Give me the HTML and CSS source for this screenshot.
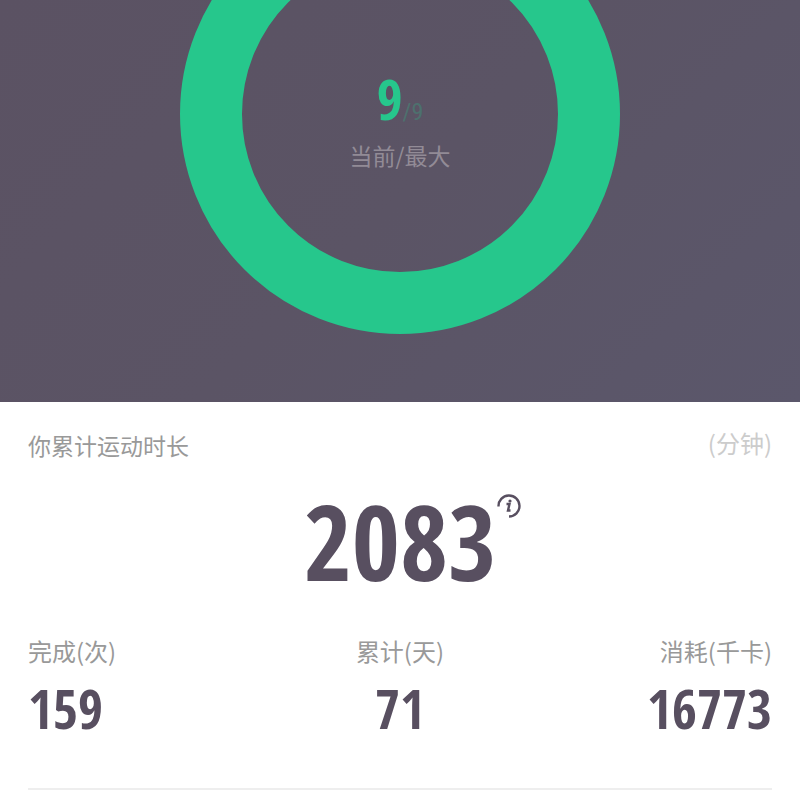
FILE: index.html
```html
<!DOCTYPE html>
<html lang="zh-CN">
<head>
<meta charset="utf-8">
<meta name="viewport" content="width=device-width, initial-scale=1">
<title>运动统计</title>
<link rel="stylesheet" href="styles.css">
</head>
<body>
<section class="hero">
  <svg class="ring" viewBox="0 0 440 440" aria-hidden="true"><circle cx="220" cy="220" r="189" fill="none" stroke="#26c78c" stroke-width="62"/></svg>
  <div class="level">
    <p class="score"><strong>9</strong><span>/9</span></p>
    <p class="caption">当前/最大</p>
  </div>
</section>
<main class="summary">
  <header class="heading"><h1>你累计运动时长</h1><span class="unit">(分钟)</span></header>
  <div class="total">
    <span class="number">2083</span>
    <button class="info" type="button" aria-label="说明"><svg viewBox="0 0 26 26" aria-hidden="true"><path d="M2.500 13.500A10.500 10.500 0 1 1 13 23.500" fill="none" stroke="#584f60" stroke-width="2.400"/><path d="M10.500 11h3l-1.500 6.500h2.500" fill="none" stroke="#584f60" stroke-width="2.400"/><circle cx="14" cy="8" r="1.600" fill="#584f60"/></svg></button>
  </div>
  <dl class="stats">
    <div><dt>完成(次)</dt><dd>159</dd></div>
    <div><dt>累计(天)</dt><dd>71</dd></div>
    <div><dt>消耗(千卡)</dt><dd>16773</dd></div>
  </dl>
</main>
</body>
</html>
```
FILE: styles.css
```css
:root { --digits: "Open Sans Condensed", "Roboto Condensed", sans-serif; }
* { box-sizing: border-box; }
body { margin: 0; background: #fff; color: #584f60; font-family: "Noto Sans CJK SC", sans-serif; }
p, h1, dl, dd { margin: 0; }
.hero { display: grid; justify-items: center; height: 402px; overflow: hidden; background: linear-gradient(135deg, #5b5263, #5b5465 50%, #5b576b); }
.hero > * { grid-area: 1 / 1; }
.ring { width: 440px; height: 440px; margin-top: -106px; }
.level { padding-top: 66px; text-align: center; }
.score { display: flex; justify-content: center; align-items: baseline; height: 66px; line-height: 64px; color: #26c78c; font-family: var(--digits); }
.score strong { font-size: 56px; font-weight: 700; }
.score span { font-family: "Roboto Condensed", sans-serif; font-size: 24px; font-weight: 400; opacity: .25; }
.caption { color: #928b96; font-size: 23px; line-height: 46px; }
.summary { margin: 0 28px; padding-top: 24px; border-bottom: 2px solid #eee; }
.heading { display: flex; justify-content: space-between; font-size: 24px; line-height: 34px; }
.heading h1 { color: #999; font-size: 23px; font-weight: 400; line-height: 38px; }
.unit { color: #ccc; }
.total { display: grid; grid-template-columns: 1fr auto 1fr; height: 168px; }
.number { grid-column: 2; font: bold 104px/154px var(--digits); }
.info { width: 26px; height: 26px; margin-top: 29px; padding: 0; border: 0; background: none; }
.info svg { display: block; }
.stats { display: grid; grid-template-columns: repeat(3, 1fr); height: 156px; text-align: center; }
.stats div:first-child { text-align: left; }
.stats div:last-child { text-align: right; }
.stats dt { color: #999; font-size: 24px; line-height: 38px; }
.stats dd { font: bold 54px/76px var(--digits); }
```
